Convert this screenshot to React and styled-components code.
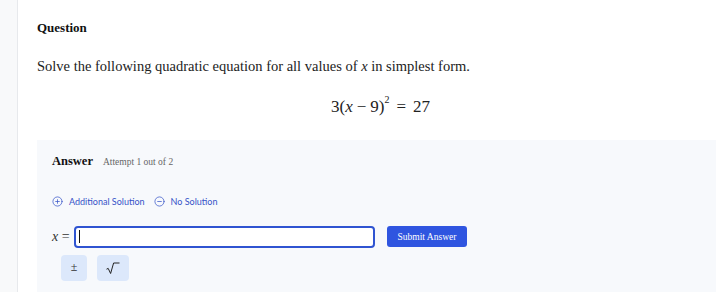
import React from 'react';
import styled, { createGlobalStyle } from 'styled-components';
import { CirclePlus, CircleMinus } from 'lucide-react';

const serif = `"Liberation Serif", "DejaVu Serif", serif`;

const GlobalStyle = createGlobalStyle`
    html, body {
        margin: 0;
        padding: 0;
        background: #ffffff;
    }
    body {
        font-family: ${serif};
        color: #1f2328;
    }
`;

const Page = styled.div`
    display: flex;
    width: 716px;
    height: 292px;
    overflow: hidden;
    font-family: ${serif};
`;

const Sidebar = styled.div`
    width: 17px;
    flex-shrink: 0;
    background: #f8f9fa;
    border-right: 1px solid #e7e9ec;
`;

const Main = styled.div`
    flex: 1;
    display: flex;
    flex-direction: column;
    padding-left: 19px;
`;

const Title = styled.h2`
    margin: 20px 0 0;
    font-size: 13px;
    font-weight: bold;
    color: #111;
    line-height: 16px;
`;

const Prompt = styled.p`
    margin: 21px 0 0;
    font-size: 14.5px;
    line-height: 18px;
    color: #222;
`;

const Var = styled.i`
    font-family: ${serif};
    font-style: italic;
`;

const Equation = styled.div`
    margin-top: 17px;
    text-align: center;
    font-family: ${serif};
    font-size: 17px;
    line-height: 20px;
    color: #222;
    padding-left: 8px;

    sup {
        font-size: 10px;
        position: relative;
        top: -2px;
        margin-left: 0;
    }
`;

const Op = styled.span`
    margin: 0 ${(p) => p.$space || 4}px;
`;

const AnswerPanel = styled.section`
    margin-top: 23px;
    flex: 1;
    background: #f7f9fc;
    padding: 14px 15px 0;
    display: flex;
    flex-direction: column;
`;

const AnswerHead = styled.div`
    display: flex;
    align-items: baseline;
    gap: 10px;
`;

const AnswerLabel = styled.span`
    font-size: 12.5px;
    font-weight: bold;
    color: #111;
`;

const Attempt = styled.span`
    font-size: 9.5px;
    color: #666;
`;

const Controls = styled.div`
    display: flex;
    gap: 9px;
    margin-top: 27px;
`;

const LinkButton = styled.button`
    display: flex;
    align-items: center;
    gap: 6px;
    padding: 0;
    border: none;
    background: none;
    font-family: Lato, "Noto Sans", sans-serif;
    font-size: 9px;
    color: #3653c8;
    cursor: pointer;
`;

const InputRow = styled.div`
    display: flex;
    align-items: center;
    margin-top: 19px;
`;

const Lhs = styled.span`
    font-family: ${serif};
    font-size: 14px;
    color: #333;
    width: 22px;
    white-space: nowrap;
`;

const Field = styled.div`
    width: 294px;
    height: 18px;
    border: 2px solid #2f54d1;
    border-radius: 4px;
    background: #fff;
    display: flex;
    align-items: center;
    padding-left: 3px;
`;

const Caret = styled.span`
    width: 1px;
    height: 13px;
    background: #111;
`;

const Submit = styled.button`
    margin-left: 12px;
    width: 80px;
    height: 21px;
    border: none;
    border-radius: 3px;
    background: #2f55e0;
    color: #fff;
    font-family: ${serif};
    font-size: 9.5px;
    cursor: pointer;
`;

const Keys = styled.div`
    display: flex;
    gap: 10px;
    margin-top: 7px;
    padding-left: 9px;
`;

const Key = styled.button`
    width: ${(p) => p.$w}px;
    height: 26px;
    border: none;
    border-radius: 4px;
    background: #dce8fb;
    color: #333;
    font-family: ${serif};
    font-size: 12px;
    display: flex;
    align-items: center;
    justify-content: center;
    padding: 0;
`;

const SqrtIcon = () => (
    <svg width="16" height="14" viewBox="0 0 16 14" fill="none">
        <path d="M1.5 8.2 L3.2 7.4 L5.6 12.5 L8.6 2 L14.5 2" stroke="#222" strokeWidth="1" strokeLinejoin="miter" />
    </svg>
);

export default function App() {
    return (
        <>
            <GlobalStyle />
            <Page>
                <Sidebar />
                <Main>
                    <Title>Question</Title>
                    <Prompt>
                        Solve the following quadratic equation for all values of <Var>x</Var> in simplest form.
                    </Prompt>
                    <Equation>
                        3(<Var>x</Var>
                        <Op>−</Op>9)<sup>2</sup>
                        <Op $space={7}>=</Op>27
                    </Equation>
                    <AnswerPanel>
                        <AnswerHead>
                            <AnswerLabel>Answer</AnswerLabel>
                            <Attempt>Attempt 1 out of 2</Attempt>
                        </AnswerHead>
                        <Controls>
                            <LinkButton>
                                <CirclePlus size={11} strokeWidth={1.6} />
                                Additional Solution
                            </LinkButton>
                            <LinkButton>
                                <CircleMinus size={11} strokeWidth={1.6} />
                                No Solution
                            </LinkButton>
                        </Controls>
                        <InputRow>
                            <Lhs>
                                <Var>x</Var> =
                            </Lhs>
                            <Field>
                                <Caret />
                            </Field>
                            <Submit>Submit Answer</Submit>
                        </InputRow>
                        <Keys>
                            <Key $w={26}>±</Key>
                            <Key $w={32}>
                                <SqrtIcon />
                            </Key>
                        </Keys>
                    </AnswerPanel>
                </Main>
            </Page>
        </>
    );
}
